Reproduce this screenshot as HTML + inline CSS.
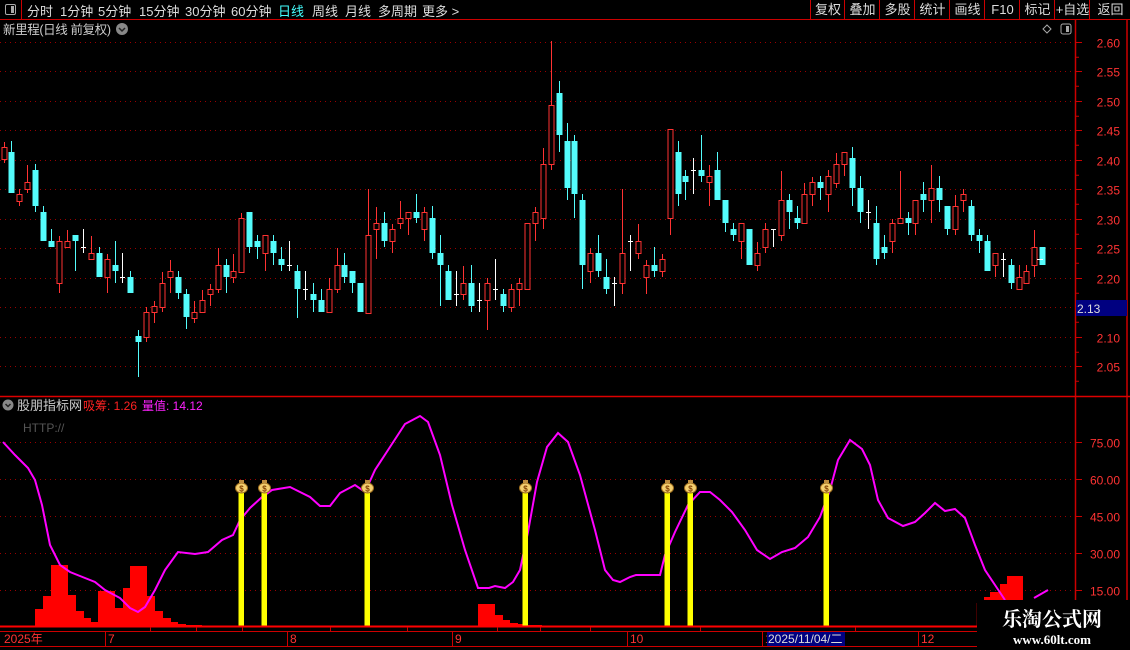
<!DOCTYPE html>
<html><head><meta charset="utf-8">
<style>
html,body{margin:0;padding:0;background:#000;width:1130px;height:650px;overflow:hidden;font-family:"Liberation Sans","Noto Sans CJK SC",sans-serif}
#top{position:absolute;left:0;top:0;width:1130px;height:19px;border-bottom:1px solid #c00;}
.m{position:absolute;top:1px;font-size:13px;color:#ddd;white-space:nowrap}
.b{position:absolute;top:0;height:19px;border-left:1px solid #c00;font-size:13px;color:#ddd;text-align:center;line-height:19px}
</style></head><body>
<div id="top">
<div style="position:absolute;left:0;top:0;width:21px;height:19px;border-right:1px solid #c00"></div>
<div style="position:absolute;left:5px;top:4px;width:9px;height:9px;border:1px solid #aaa;border-radius:2px"><div style="position:absolute;right:1px;top:1px;width:3px;height:7px;background:#aaa"></div></div>
<span class="m" style="left:27px">分时</span>
<span class="m" style="left:60px">1分钟</span>
<span class="m" style="left:98px">5分钟</span>
<span class="m" style="left:139px">15分钟</span>
<span class="m" style="left:185px">30分钟</span>
<span class="m" style="left:231px">60分钟</span>
<span class="m" style="left:278px;color:#4ff">日线</span>
<span class="m" style="left:312px">周线</span>
<span class="m" style="left:345px">月线</span>
<span class="m" style="left:378px">多周期</span>
<span class="m" style="left:422px">更多 &gt;</span>
<div class="b" style="left:810px;width:34px">复权</div>
<div class="b" style="left:844px;width:35px">叠加</div>
<div class="b" style="left:879px;width:35px">多股</div>
<div class="b" style="left:914px;width:35px">统计</div>
<div class="b" style="left:949px;width:35px">画线</div>
<div class="b" style="left:984px;width:35px">F10</div>
<div class="b" style="left:1019px;width:35px">标记</div>
<div class="b" style="left:1054px;width:35px">+自选</div>
<div class="b" style="left:1089px;width:41px">返回</div>
</div>
<svg id="s" width="1130" height="650" style="position:absolute;left:0;top:0" xmlns="http://www.w3.org/2000/svg" font-family="Liberation Sans, Noto Sans CJK SC, sans-serif">
<text x="3" y="34" fill="#ccc" font-size="12.5" textLength="108">新里程(日线 前复权)</text>
<circle cx="122" cy="29" r="6" fill="#888"/><path d="M119 28 l3 3 l3 -3" stroke="#222" stroke-width="1.5" fill="none"/>
<path d="M1047 25 l4 4 l-4 4 l-4 -4z" stroke="#aaa" fill="none"/>
<rect x="1061" y="24" width="10" height="10" rx="2" stroke="#aaa" fill="none"/><rect x="1066" y="26" width="3" height="6" fill="#aaa"/>
<g id="g"></g>
<line x1="0" y1="396.5" x2="1130" y2="396.5" stroke="#d00" stroke-width="1.5"/>
<circle cx="8" cy="405" r="5.5" fill="#888"/><path d="M5.5 404 l2.5 2.5 l2.5 -2.5" stroke="#222" stroke-width="1.5" fill="none"/>
<text x="17" y="410" fill="#ccc" font-size="13">股朋指标网</text>
<text x="83" y="410" fill="#f22" font-size="12">吸筹: 1.26</text>
<text x="142" y="410" fill="#f2f" font-size="12">量值: 14.12</text>
<text x="23" y="432" fill="#555" font-size="12">HTTP://</text>
<rect x="977" y="600" width="153" height="50" fill="#000"/>
<text x="1052" y="626" fill="#fff" font-size="20" font-weight="bold" text-anchor="middle" font-family="Liberation Serif, Noto Serif CJK SC, serif">乐淘公式网</text>
<text x="1052" y="644" fill="#fff" font-size="13" font-weight="bold" text-anchor="middle" font-family="Liberation Serif, serif">www.60lt.com</text>
</svg>
<script>
var g=document.getElementById('g'),h='';
function L(x1,y1,x2,y2,c,w,d){h+='<line x1="'+x1+'" y1="'+y1+'" x2="'+x2+'" y2="'+y2+'" stroke="'+c+'" stroke-width="'+(w||1)+'"'+(d?' stroke-dasharray="'+d+'"':'')+'/>';}
function T(x,y,t,c,s,a){h+='<text x="'+x+'" y="'+y+'" fill="'+c+'" font-size="'+(s||12)+'"'+(a?' text-anchor="'+a+'"':'')+'>'+t+'</text>';}
for(var i=0;i<12;i++){var p=2.60-i*0.05,y=Math.round(41.5+i*29.5)+0.5;L(0,y,1075,y,'#900',1,'1 4');L(1075,y,1082,y,'#c00');T(1120,y+5,p.toFixed(2),'#f33',12,'end');L(1075,y+14.75,1079,y+14.75,'#c00');}
[75,60,45,30,15].forEach(function(v){var y=Math.round(627-v*2.467)+0.5;L(0,y,1075,y,'#900',1,'1 4');L(1075,y,1082,y,'#c00');T(1120,y+5,v.toFixed(2),'#f33',12,'end');});
L(1075.5,20,1075.5,627,'#c00',1.5);L(1127,20,1127,650,'#c00',1.5);
h+='<rect x="1076" y="300" width="51" height="16" fill="#000080"/>';T(1077,313,'2.13','#ddd',12);
var C=[['r',147,159,142,163],['c',152,193,141,193],['r',194,201,189,206],['r',182,189,165,193],['c',170,206,164,212],['c',212,241,206,241],['c',241,247,229,247],['r',241,283,236,293],['r',241,247,230,247],['c',235,241,235,271],['w',247,247,229,253],['r',253,259,236,259],['c',253,277,247,277],['r',259,277,254,293],['c',265,271,241,283],['w',277,277,253,283],['c',277,293,271,293],['c',336,342,330,377],['r',312,337,307,342],['r',306,312,301,323],['r',283,307,272,312],['r',271,277,260,293],['c',277,293,271,299],['c',294,317,289,329],['r',312,318,301,323],['r',300,312,290,312],['r',289,294,284,306],['r',265,289,248,293],['c',265,277,259,293],['r',271,277,254,283],['r',218,272,213,272],['c',212,247,212,253],['c',241,247,235,259],['r',235,253,235,271],['c',241,253,235,265],['c',259,265,247,271],['w',265,265,241,271],['c',271,289,265,318],['w',289,289,271,300],['c',294,300,283,312],['c',300,312,289,312],['r',289,312,278,312],['r',265,289,248,293],['c',265,277,253,283],['c',271,283,271,293],['c',283,312,283,312],
['r',235,313,189,313],['r',223,229,207,259],['c',223,241,212,247],['r',229,241,224,253],['r',218,223,201,229],['r',212,218,212,235],['c',212,218,194,223],['r',212,229,207,241],['c',218,253,206,259],['c',253,265,235,306],['c',271,300,265,300],['w',294,294,271,306],['r',283,294,266,300],['c',283,306,265,312],['w',300,300,283,312],['r',283,300,278,330],['w',289,289,259,300],['c',294,306,289,312],['r',289,307,284,312],['r',283,289,278,306],['r',223,289,223,289],['r',212,223,207,241],['r',164,218,148,229],['r',105,164,41,170],['c',93,135,81,152],['c',141,188,123,200],['c',141,194,135,218],['c',200,265,194,289],['r',253,271,248,283],['c',253,271,235,277],['c',277,289,259,294],['w',283,283,277,306],['r',253,283,189,294],['w',241,241,235,271],['r',241,253,224,259],['r',265,277,260,294],['c',265,271,247,277],['r',259,271,254,277],['r',129,218,129,235],['c',152,194,141,206],['c',176,182,170,200],['w',170,170,158,194],['c',170,176,135,182],['r',176,182,165,206],['c',170,200,152,200],
['c',200,223,200,232],['c',229,235,223,241],['r',223,241,223,259],['c',229,265,229,265],['r',253,265,242,271],['r',229,247,223,253],['w',229,229,229,247],['r',200,235,171,241],['c',200,212,194,229],['c',218,223,206,229],['r',194,223,183,223],['r',182,194,177,206],['c',182,188,176,200],['r',176,194,170,212],['r',164,183,153,188],['r',152,164,152,176],['c',158,188,147,206],['c',188,212,176,223],['w',212,212,200,229],['c',223,259,206,265],['c',247,253,235,259],['r',223,241,219,253],['r',218,223,171,223],['c',218,223,212,235],['r',200,223,200,235],['c',194,200,182,212],['r',188,200,165,223],['c',188,200,176,212],['c',206,229,206,235],['r',206,229,195,235],['r',194,200,189,212],['c',206,235,200,241],['c',235,241,229,253],['c',241,271,235,271],['r',253,265,253,277],['w',259,259,253,277],['c',265,283,259,289],['r',277,289,265,289],['r',271,283,265,283],['r',247,265,230,277],['c',247,265,247,265]];
C.forEach(function(c,k){var x=Math.round(3.5+7.93*k),col=c[0]=='r'?'#ff3232':c[0]=='c'?'#54fcfc':'#fff';
L(x+0.5,c[3],x+0.5,c[4],col);
if(c[0]=='w'){L(x-2,c[1]+0.5,x+3,c[1]+0.5,col);}
else if(c[0]=='r'){h+='<rect x="'+(x-2)+'" y="'+(c[1]+0.5)+'" width="5" height="'+Math.max(c[2]-c[1],2)+'" fill="#000" stroke="'+col+'"/>';}
else{h+='<rect x="'+(x-2.5)+'" y="'+c[1]+'" width="6" height="'+Math.max(c[2]-c[1],2)+'" fill="'+col+'"/>';}});
L(1037,259.5,1043,259.5,'#fff');
var H=[[35,43,609],[43,51,596],[51,68,565],[68,76,595],[76,84,611],[84,91,618],[91,98,622],[98,115,591],[115,123,608],[123,130,588],[130,147,566],[147,155,596],[155,163,611],[163,171,618],[171,178,622],[178,186,624],[186,202,625],[478,495,604],[495,503,615],[503,510,620],[510,518,623],[518,526,624],[526,542,625],[984,990,597],[990,1000,592],[1000,1007,584],[1007,1023,576]];
H.forEach(function(b){h+='<rect x="'+b[0]+'" y="'+b[2]+'" width="'+(b[1]-b[0])+'" height="'+(626-b[2])+'" fill="#f00"/>';});
var P=[[3,442],[15,455],[28,468],[35,480],[42,505],[50,545],[60,565],[70,572],[85,578],[95,582],[105,590],[120,598],[130,608],[138,612],[145,607],[155,590],[165,570],[178,552],[195,554],[208,552],[222,540],[233,535],[240,520],[250,508],[262,497],[272,490],[290,487],[300,492],[310,497],[320,506],[330,506],[340,493],[355,485],[365,492],[375,470],[390,447],[405,424],[420,416],[428,422],[440,455],[452,505],[465,550],[478,588],[489,588],[495,586],[505,588],[513,582],[520,570],[528,532],[537,482],[547,447],[558,433],[568,442],[580,475],[595,530],[605,570],[613,580],[620,582],[630,577],[636,575],[660,575],[665,555],[675,532],[688,505],[700,492],[710,492],[720,500],[732,512],[745,530],[757,550],[770,559],[782,552],[795,548],[808,537],[820,517],[830,490],[838,460],[850,440],[862,449],[870,465],[878,500],[888,518],[903,526],[915,522],[925,513],[935,503],[945,511],[955,509],[965,518],[975,545],[985,570],[995,585],[1005,600]];
h+='<polyline points="'+P.map(function(p){return p.join(',')}).join(' ')+'" fill="none" stroke="#f0f" stroke-width="2"/>';
L(1034,598,1048,590,'#f0f',2);
[241,264,367,525,667,690,826].forEach(function(x){h+='<rect x="'+(x-2.5)+'" y="493" width="5.5" height="133" fill="#ff0"/>';
h+='<ellipse cx="'+(x+0.5)+'" cy="488" rx="6" ry="5" fill="#f4d070" stroke="#a07020"/><rect x="'+(x-2)+'" y="480" width="5" height="3" fill="#c09040"/><text x="'+(x+0.5)+'" y="491.5" font-size="8" fill="#804000" text-anchor="middle" font-weight="bold">$</text>';});
L(0,626.5,977,626.5,'#f00',2);L(977.5,603,977.5,627,'#f00',1.5);
L(0,631.5,977,631.5,'#c00');L(0,646.5,977,646.5,'#c00');
T(4,643,'2025年','#f33',12);
[[105,'7'],[287,'8'],[452,'9'],[627,'10'],[762,'1'],[918,'12']].forEach(function(a){L(a[0]+0.5,632,a[0]+0.5,646,'#c00');T(a[0]+3,643,a[1],'#f33',12);});
[150,196,242,330,407,497,540,590,700,855].forEach(function(x){L(x+0.5,627,x+0.5,631,'#c00');});
h+='<rect x="767" y="632" width="78" height="14" fill="#000080"/>';T(768,643,'2025/11/04/二','#ddd',12);
g.innerHTML=h;
</script>
</body></html>
